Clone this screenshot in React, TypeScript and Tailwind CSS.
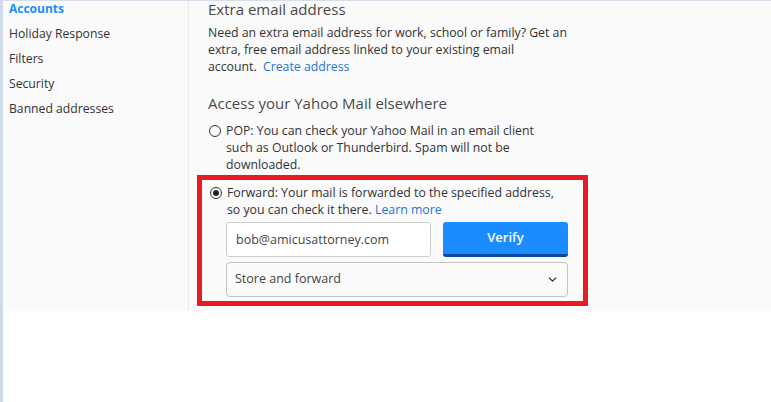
import { ChevronDown } from "lucide-react";

const sideItems = ["Accounts", "Holiday Response", "Filters", "Security", "Banned addresses"];

const Radio = ({ checked }: { checked?: boolean }) => (
  <span className="mt-[3px] flex h-[12px] w-[12px] shrink-0 items-center justify-center rounded-full border border-[#333]">
    {checked && <span className="h-[6px] w-[6px] rounded-full bg-[#222]" />}
  </span>
);

export default function App() {
  return (
    <div
      className="min-h-[402px] w-[771px] border-l-[3px] border-t border-l-[#cfd9e7] border-t-[#d5deea] bg-white text-[12.3px] text-[#333]"
      style={{ fontFamily: '"Open Sans", "Noto Sans", sans-serif' }}
    >
      <div className="flex bg-[#fafafa]">
        {/* sidebar */}
        <div className="w-[186px] shrink-0 border-r border-[#ececec] pl-[6px]">
          <ul className="mt-[-1px] flex flex-col gap-2">
            {sideItems.map((item, i) => (
              <li
                key={item}
                className={
                  i === 0
                    ? "text-[12px] leading-[17px] font-bold text-[#188fff]"
                    : "text-[12.2px] leading-[17px] text-[#333]"
                }
              >
                {item}
              </li>
            ))}
          </ul>
        </div>

        {/* content */}
        <div className="flex-1 pl-[19px] pb-[5px]">
          <h2 className="mt-[-2px] text-[15px] leading-[20px] text-[#4a4a4a]">Extra email address</h2>
          <p className="mt-[5px] whitespace-nowrap leading-[17px]">
            Need an extra email address for work, school or family? Get an
            <br />
            extra, free email address linked to your existing email
            <br />
            account.{" "}
            <a className="ml-[3px] text-[#1f74db]" href="#">
              Create address
            </a>
          </p>

          <h2 className="mt-[18px] text-[15px] leading-[20px] text-[#4a4a4a]">Access your Yahoo Mail elsewhere</h2>

          <div className="ml-[1px] mt-[9px] flex gap-[5px]">
            <Radio />
            <p className="whitespace-nowrap leading-[17px]">
              POP: You can check your Yahoo Mail in an email client
              <br />
              such as Outlook or Thunderbird. Spam will not be
              <br />
              downloaded.
            </p>
          </div>

          <div className="ml-[-11px] mt-[2px] w-[391px] border-[5px] border-[#e81b23] pl-[8px] pr-[15px] pt-[4px] pb-[4px]">
            <div className="flex gap-[5px]">
              <Radio checked />
              <p className="whitespace-nowrap leading-[17px]">
                Forward: Your mail is forwarded to the specified address,
                <br />
                so you can check it there.{" "}
                <a className="text-[#1f74db]" href="#">
                  Learn more
                </a>
              </p>
            </div>

            <div className="ml-[16px] mt-[4px] flex flex-col gap-[5px]">
              <div className="flex gap-[12px]">
                <input
                  className="h-[35px] w-[205px] rounded-[3px] border border-[#cfcfcf] bg-white px-[9px] text-[12.5px] text-[#444] outline-none"
                  defaultValue="bob@amicusattorney.com"
                />
                <button className="h-[35px] w-[125px] rounded-[3px] border-b-[3px] border-[#0c4aa0] bg-[#1a8cff] text-[13px] font-semibold text-white">
                  Verify
                </button>
              </div>
              <div className="flex h-[35px] w-[342px] items-center justify-between rounded-[4px] border border-[#c4c4c4] bg-[#fafafa] pl-[8px] pr-[8px]">
                <span className="text-[12.5px] text-[#444]">Store and forward</span>
                <ChevronDown size={13} strokeWidth={2.5} className="text-[#333]" />
              </div>
            </div>
          </div>
        </div>
      </div>
    </div>
  );
}
